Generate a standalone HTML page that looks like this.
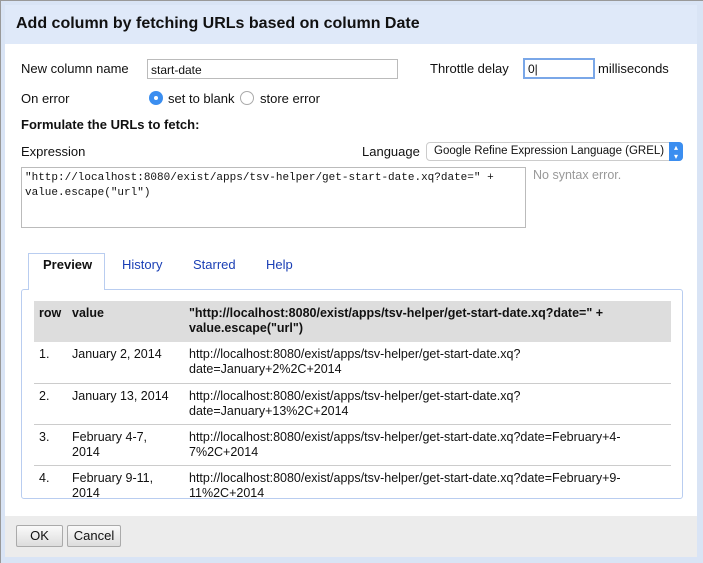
<!DOCTYPE html>
<html><head><style>
*{box-sizing:border-box;margin:0;padding:0}
body{width:703px;height:563px;overflow:hidden;background:#dfe8f6;font-family:"Liberation Sans",sans-serif;font-size:13px;color:#111;position:relative}
.a{position:absolute;white-space:nowrap}
.frame{position:absolute;left:0;top:0;width:703px;height:563px;border-left:1px solid #999;border-top:1px solid #999;background:#d9e4f5}
.win{position:absolute;left:5px;top:5px;width:692px;height:552px;background:#fff}
.hdr{position:absolute;left:5px;top:5px;width:692px;height:39px;background:#dfe9f9}
.inp{position:absolute;border:1px solid #bbb;background:#fff;font-size:12px;padding:3px 3px}
.link{color:#1a3fb5}
table{border-collapse:collapse;font-size:12.5px}
td,th{vertical-align:top;text-align:left;line-height:15px}
.btn{position:absolute;border:1px solid #aaa;border-radius:2px;background:linear-gradient(#fafafa,#ddd);font-size:13px;text-align:center;line-height:19px}
</style></head><body>
<div class="frame"></div>
<div class="win"></div>
<div class="hdr"></div>
<div class="a" style="left:16px;top:15px;font-size:16px;font-weight:bold">Add column by fetching URLs based on column Date</div>

<div class="a" style="left:21px;top:61px">New column name</div>
<div class="inp" style="left:147px;top:59px;width:251px;height:20px">start-date</div>
<div class="a" style="left:430px;top:61px">Throttle delay</div>
<div class="inp" style="left:523px;top:58px;width:72px;height:21px;border:2px solid #7aa7e8;padding:2px 3px">0|</div>
<div class="a" style="left:598px;top:61px">milliseconds</div>

<div class="a" style="left:21px;top:91px">On error</div>
<div class="a" style="left:149px;top:91px;width:14px;height:14px;border-radius:50%;background:#3b8ef0"><div style="position:absolute;left:5px;top:5px;width:4px;height:4px;border-radius:50%;background:#fff"></div></div>
<div class="a" style="left:168px;top:91px">set to blank</div>
<div class="a" style="left:240px;top:91px;width:14px;height:14px;border-radius:50%;border:1px solid #aaa;background:#fff"></div>
<div class="a" style="left:260px;top:91px">store error</div>

<div class="a" style="left:21px;top:117px;font-weight:bold">Formulate the URLs to fetch:</div>
<div class="a" style="left:21px;top:144px">Expression</div>
<div class="a" style="left:362px;top:144px">Language</div>
<div class="a" style="left:426px;top:142px;width:257px;height:19px;border:1px solid #ccc;border-radius:4px;background:#fff;font-size:11.5px;padding:2px 7px;overflow:hidden">Google Refine Expression Language (GREL)</div>
<div class="a" style="left:669px;top:142px;width:14px;height:19px;background:#3b8ef0;border-radius:0 4px 4px 0;color:#fff;font-size:8px;text-align:center;line-height:9px;padding-top:1px">▴<br>▾</div>
<div class="a" style="left:21px;top:167px;width:505px;height:61px;border:1px solid #bbb;font-family:'Liberation Mono',monospace;font-size:11px;padding:3px 3px;line-height:15px;white-space:pre">"http://localhost:8080/exist/apps/tsv-helper/get-start-date.xq?date=" +
value.escape("url")</div>
<div class="a" style="left:533px;top:168px;color:#999;font-size:12.5px">No syntax error.</div>

<div class="a" style="left:28px;top:253px;width:77px;height:37px;border:1px solid #b9cdf0;border-bottom:none;background:#fff;z-index:2"></div>
<div class="a" style="left:43px;top:257px;font-weight:bold;z-index:3">Preview</div>
<div class="a link" style="left:122px;top:257px">History</div>
<div class="a link" style="left:193px;top:257px">Starred</div>
<div class="a link" style="left:266px;top:257px">Help</div>
<div class="a" style="left:21px;top:289px;width:662px;height:210px;border:1px solid #b9cdf0;border-radius:3px;overflow:hidden;background:#fff">
<table style="position:absolute;left:12px;top:11px;width:637px">
<tr style="background:#ddd;font-weight:bold;height:41px"><th style="padding:5px 5px;width:34px">row</th><th style="padding:5px 4px;width:117px">value</th><th style="padding:5px 4px">"http://localhost:8080/exist/apps/tsv-helper/get-start-date.xq?date=" +<br>value.escape("url")</th></tr>
<tr style="height:41px;border-bottom:1px solid #ccc"><td style="padding:5px 5px">1.</td><td style="padding:5px 4px">January 2, 2014</td><td style="padding:5px 4px">http://localhost:8080/exist/apps/tsv-helper/get-start-date.xq?<br>date=January+2%2C+2014</td></tr>
<tr style="height:41px;border-bottom:1px solid #ccc"><td style="padding:5px 5px">2.</td><td style="padding:5px 4px">January 13, 2014</td><td style="padding:5px 4px">http://localhost:8080/exist/apps/tsv-helper/get-start-date.xq?<br>date=January+13%2C+2014</td></tr>
<tr style="height:41px;border-bottom:1px solid #ccc"><td style="padding:5px 5px">3.</td><td style="padding:5px 4px">February 4-7,<br>2014</td><td style="padding:5px 4px">http://localhost:8080/exist/apps/tsv-helper/get-start-date.xq?date=February+4-<br>7%2C+2014</td></tr>
<tr style="height:41px"><td style="padding:5px 5px">4.</td><td style="padding:5px 4px">February 9-11,<br>2014</td><td style="padding:5px 4px">http://localhost:8080/exist/apps/tsv-helper/get-start-date.xq?date=February+9-<br>11%2C+2014</td></tr>
</table></div>

<div class="a" style="left:5px;top:516px;width:692px;height:41px;background:#ececec"></div>
<div class="btn" style="left:16px;top:525px;width:47px;height:22px">OK</div>
<div class="btn" style="left:67px;top:525px;width:54px;height:22px">Cancel</div>
</body></html>
